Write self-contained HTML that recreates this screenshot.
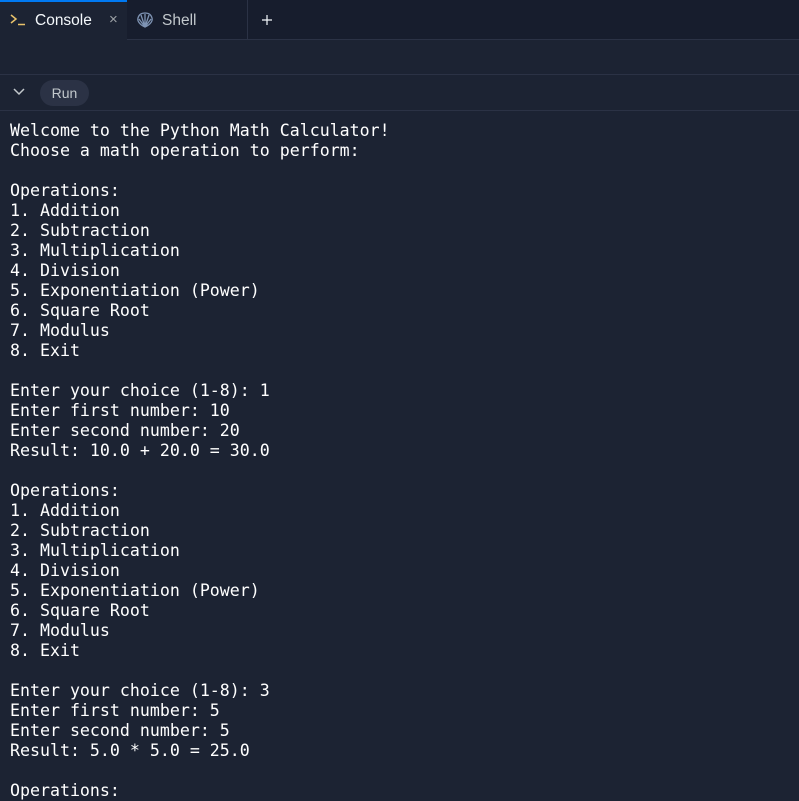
<!DOCTYPE html>
<html><head><meta charset="utf-8"><style>
html,body{margin:0;padding:0;width:799px;height:796px;overflow:hidden;background:#1c2333;}
.tabs{position:absolute;left:0;top:0;width:799px;height:39px;background:#171d2d;border-bottom:1px solid #2b3245;}
.tab{position:absolute;top:0;height:39px;font-family:"Liberation Sans",sans-serif;font-size:15.5px;color:#f5f9fc;}
.t1{left:0;width:127px;background:#1c2333;height:40px;}
.t1:before{content:"";position:absolute;left:0;top:0;width:127px;height:2px;background:#0079f2;}
.t2{left:128px;width:119px;border-right:1px solid #2b3245;color:#c2c8cc;}
.bar{position:absolute;left:0;top:74px;width:799px;height:35px;border-top:1px solid #2b3245;border-bottom:1px solid #2b3245;}
.run{position:absolute;left:40px;top:5px;width:49px;height:26px;border-radius:13px;background:#2b3245;color:#c2c8cc;font-family:"Liberation Sans",sans-serif;font-size:14px;line-height:26px;text-align:center;}
pre{position:absolute;left:10px;top:121px;margin:0;font-family:"DejaVu Sans Mono","Liberation Mono",monospace;font-size:16.6px;line-height:20px;color:#ffffff;}
</style></head><body>
<div class="tabs">
 <div class="tab t1">
  <svg style="position:absolute;left:10px;top:13px" width="16" height="14" viewBox="0 0 16 14"><path d="M1 2 L6 6 L1 10" stroke="#e8c26b" stroke-width="1.5" fill="none"/><path d="M8 11.5 H15" stroke="#e8c26b" stroke-width="1.5"/></svg>
  <span style="position:absolute;left:35px;top:12px">Console</span>
  <span style="position:absolute;left:109px;top:11px;color:#9da2a6;font-size:15px">×</span>
 </div>
 <div class="tab t2">
  <svg style="position:absolute;left:8px;top:11px" width="18" height="18" viewBox="0 0 18 18" fill="none" stroke="#7e93b3" stroke-width="1.3"><path d="M9 16 C4 14 1 10 2 7 C3 3 6 2 9 2 C12 2 15 3 16 7 C17 10 14 14 9 16Z"/><path d="M9 16 L9 3 M9 16 L5 4 M9 16 L13 4 M9 16 L3 8 M9 16 L15 8"/></svg>
  <span style="position:absolute;left:34px;top:12px">Shell</span>
 </div>
 <svg style="position:absolute;left:261px;top:14px" width="12" height="12"><path d="M6 1V11M1 6H11" stroke="#f5f9fc" stroke-width="1.2"/></svg>
</div>
<div class="bar">
 <svg style="position:absolute;left:12px;top:12px" width="14" height="10"><path d="M2 2 L7 7 L12 2" stroke="#c2c8cc" stroke-width="1.5" fill="none"/></svg>
 <div class="run">Run</div>
</div>
<pre>Welcome to the Python Math Calculator!
Choose a math operation to perform:

Operations:
1. Addition
2. Subtraction
3. Multiplication
4. Division
5. Exponentiation (Power)
6. Square Root
7. Modulus
8. Exit

Enter your choice (1-8): 1
Enter first number: 10
Enter second number: 20
Result: 10.0 + 20.0 = 30.0

Operations:
1. Addition
2. Subtraction
3. Multiplication
4. Division
5. Exponentiation (Power)
6. Square Root
7. Modulus
8. Exit

Enter your choice (1-8): 3
Enter first number: 5
Enter second number: 5
Result: 5.0 * 5.0 = 25.0

Operations:</pre>
</body></html>
